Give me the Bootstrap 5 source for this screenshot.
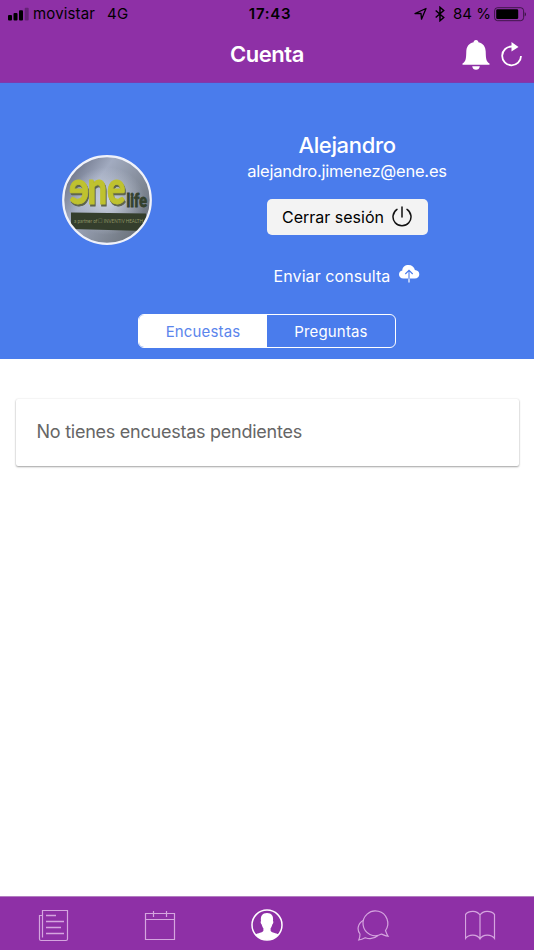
<!DOCTYPE html>
<html lang="es">
<head>
<meta charset="utf-8">
<meta name="viewport" content="width=device-width, initial-scale=1">
<title>Cuenta</title>
<link href="https://cdn.jsdelivr.net/npm/bootstrap@5.3.0/dist/css/bootstrap.min.css" rel="stylesheet">
<style>
body{font-family:Inter,"Liberation Sans",sans-serif;background:#fff;height:950px;overflow:hidden}
svg{display:block;flex:none}
.app-head{background:#8e30a6;border-bottom:1px solid #7d3aae;height:83px}
.status{height:28px;font-size:15px;line-height:28px;color:#000;display:grid;grid-template-columns:1fr auto 1fr;padding:0 7px 0 8px}
.clock{letter-spacing:.7px;padding-left:5px}
.signal{margin-right:4px}
.carrier{letter-spacing:.15px}
.net{margin-left:12px;letter-spacing:.2px}
.battery{margin-left:3px;margin-right:1px}
.title-row{height:54px;display:grid;grid-template-columns:1fr auto 1fr;padding-right:10px;padding-left:10px}
.title-row h1{font-size:22px;line-height:52px;font-weight:600;color:#fff;letter-spacing:-.45px}
.profile{background:#4a7cec;height:276px;color:#fff}
.who{height:231px;display:grid;grid-template-columns:213px 268px}
.avatar{margin-top:72px}
.relief{filter:drop-shadow(1px 2px 0 #5d634b)}
.person{padding-top:48px}
.name{font-size:22px;line-height:28px;font-weight:500;letter-spacing:-.35px}
.mail{font-size:16.5px;line-height:24px;letter-spacing:-.22px}
.out{background:#f3f3f3;border:0;border-radius:5px;width:161px;height:36px;margin-top:16px;font-size:16px;color:#000;padding:0}
.ask{margin-top:28px;font-size:16px;line-height:26px;letter-spacing:.07px}
.cloud{margin-top:1px}
.seg{width:258px;height:34px;border-radius:6px;border:1.5px solid #fff;overflow:hidden;font-size:15px;line-height:33px;letter-spacing:.16px}
.seg .on{background:#fff;color:#5b85ec}
.notice{margin:40px 15.5px 0;height:67px;border:0;border-radius:2px;box-shadow:0 1px 2px rgba(0,0,0,.35),0 0 2px rgba(0,0,0,.1);padding:0 21px;font-size:18px;line-height:65px;color:#666;letter-spacing:-.25px}
.tabs{height:54px;background:#8e30a6;border-top:1px solid #b27dc0}
.tabs a{flex:1;padding-top:9px}
</style>
<script src="https://cdn.jsdelivr.net/npm/bootstrap@5.3.0/dist/js/bootstrap.bundle.min.js"></script>
</head>
<body class="d-flex flex-column">
<header class="app-head">
  <div class="status">
    <div class="d-flex align-items-center"><svg class="signal" width="21" height="14" viewBox="0 0 21 14"><rect y="8" width="4" height="5.5" rx="1"/><rect x="5.5" y="6" width="4" height="7.5" rx="1"/><rect x="11" y="3.3" width="4" height="10.2" rx="1"/><rect x="16.7" y=".8" width="4" height="12.7" rx="1" opacity=".28"/></svg><span class="carrier">movistar</span><span class="net">4G</span></div>
    <div class="clock fw-semibold">17:43</div>
    <div class="d-flex align-items-center justify-content-end">
      <svg width="13" height="14" viewBox="0 0 13 14" fill="none" stroke="#000" stroke-width="1.3" stroke-linejoin="round"><path d="M1 6.500 12 1.500 7.500 12.200 7 6.500Z"/></svg>
      <svg class="ms-2" width="10" height="16" viewBox="0 0 10 16" fill="none" stroke="#000" stroke-width="1.5"><path d="M.7 4.500 8.700 11.500 5 14.700V1.300L8.700 4.500.7 11.500"/></svg>
      <span class="ms-2">84 %</span>
      <svg class="battery" width="32" height="15" viewBox="0 0 32 15"><rect x=".6" y=".7" width="29" height="13" rx="3" fill="none" stroke="#000" opacity=".55"/><rect x="2.200" y="2.300" width="22" height="9.800" rx="1.300"/><path d="M30.700 5.200c1.700.6 1.700 3.700 0 4.300z" opacity=".6"/></svg>
    </div>
  </div>
  <div class="title-row">
    <span></span><h1 class="m-0">Cuenta</h1>
    <div class="d-flex justify-content-end align-items-center">
      <svg width="28" height="32" viewBox="0 0 28 32" fill="#fff"><path d="M14 1c1.700 0 2.200 1 2.400 2.200 5 1.100 7.200 4.800 7.300 9.300.2 7.500.4 9.700 3.800 12.100v1.200H.5v-1.200c3.400-2.400 3.600-4.600 3.800-12.100.1-4.500 2.300-8.200 7.300-9.300C11.800 2 12.300 1 14 1Z"/><path d="M10.200 27.200h7.600c-.3 2.300-1.700 3.600-3.800 3.600s-3.500-1.300-3.800-3.600Z"/></svg>
      <svg class="ms-2" width="26" height="26" viewBox="0 0 26 26"><path d="M14 4.500A9.400 9.400 0 1 0 23 14" fill="none" stroke="#fff" stroke-width="1.800"/><path d="M13.500 0 20.500 5 13.500 9.500Z" fill="#fff"/></svg>
    </div>
  </div>
</header>
<section class="profile">
  <div class="who">
    <svg class="avatar mx-auto" width="90" height="90" viewBox="0 0 90 90">
      <defs><clipPath id="face"><circle cx="45" cy="45" r="43.500"/></clipPath><linearGradient id="wall" x1="0" y1="0" x2="1" y2=".7"><stop stop-color="#50566a"/><stop offset=".4" stop-color="#a2abc0"/><stop offset="1" stop-color="#697078"/></linearGradient><radialGradient id="glow"><stop stop-color="#d3dae9" stop-opacity=".9"/><stop offset="1" stop-color="#d3dae9" stop-opacity="0"/></radialGradient></defs>
      <g clip-path="url(#face)"><path fill="url(#wall)" d="M0 0h90v90H0z"/><ellipse cx="45" cy="46" rx="38" ry="34" fill="url(#glow)"/>
      <g class="relief" font-family="Lato,sans-serif" font-weight="900" font-size="45" fill="#bfc22f" stroke="#bfc22f" stroke-width=".8"><text x="-27" y="48.500" transform="scale(-1 1)" textLength="20" lengthAdjust="spacingAndGlyphs">e</text><text x="25.500" y="48.500" textLength="38" lengthAdjust="spacingAndGlyphs">ne</text></g>
      <text x="64.500" y="52" font-family="Lato,sans-serif" font-weight="900" font-size="19" fill="#34412e" stroke="#34412e" stroke-width=".9" textLength="20.500" lengthAdjust="spacingAndGlyphs">life</text>
      <path fill="#343e2c" d="m9 57.500 75 1v17.500L9 74z"/><text x="12" y="68" font-family="Lato,sans-serif" font-size="5.500" fill="#8f9564" textLength="69" lengthAdjust="spacingAndGlyphs">a partner of ☐ INVENTIV HEALTH</text></g>
      <circle cx="45" cy="45" r="43.800" fill="none" stroke="#f0f2fa" stroke-width="2.200"/>
    </svg>
    <div class="person text-center d-flex flex-column align-items-center">
      <div class="name">Alejandro</div>
      <div class="mail">alejandro.jimenez@ene.es</div>
      <button class="out d-flex align-items-center justify-content-center">Cerrar sesión<svg class="ms-2" width="20" height="22" viewBox="0 0 20 22" fill="none" stroke="#111" stroke-width="1.500" stroke-linecap="round"><path d="M10 1v10M5 3.300a9 9 0 1 0 10 0"/></svg></button>
      <div class="ask d-flex">Enviar consulta<svg class="cloud ms-2" width="22" height="20" viewBox="0 0 22 20"><path fill="#fff" d="M5.500 14.500C2.600 14.500 1 12.800 1 10.500c0-2 1.300-3.500 3.300-3.900C4.300 3 7 1 10.500 1c3.400 0 5.800 2 6.400 5 2.700.2 4.400 1.900 4.400 4.200 0 2.500-1.700 4.300-4.600 4.300Z"/><path d="M11 15V6.500M7.300 10 11 6.300l3.700 3.700" fill="none" stroke="#4a7cec" stroke-width="1.100"/><path d="M11 14.500V18.500" stroke="#fff" stroke-width="1.200"/></svg></div>
    </div>
  </div>
  <div class="seg d-flex mx-auto text-center"><div class="on w-50">Encuestas</div><div class="w-50">Preguntas</div></div>
</section>
<main class="flex-grow-1"><div class="card notice">No tienes encuestas pendientes</div></main>
<nav class="tabs d-flex">
  <a href="#" class="d-flex justify-content-center" aria-label="Noticias"><svg width="32" height="36" viewBox="-1 0 32 36" fill="none" stroke="#d5a5df" stroke-width="1.200"><path d="M4.500 31.500V4.500H29.500V33q0 1.500-1.500 1.500H3Q1.500 34.500 1.500 33V9.500h3"/><path d="M8 9.500h10M8 15.500h18M8 21.500h15M8 27.500h18" stroke-width="1.500"/></svg></a>
  <a href="#" class="d-flex justify-content-center" aria-label="Calendario"><svg width="32" height="36" viewBox="0 0 32 36" fill="none" stroke="#d5a5df" stroke-width="1.200"><path d="M1.500 7.500h29v26h-29zM1.500 13.500h29M9.500 5v6M22.500 5v6"/></svg></a>
  <a href="#" class="d-flex justify-content-center" aria-label="Cuenta"><svg width="32" height="36" viewBox="0 0 32 36"><circle cx="16" cy="19" r="15" fill="none" stroke="#fff" stroke-width="1.500"/><path fill="#fff" d="M16 7c4.700 0 6.700 3 6 8 .8.700.2 3-.7 3.500-.4 2-1.100 3-1.700 3.800v2.500c1 2 5.500 2.200 8 3.800C25 32 21 34 16 34S7 32 4.400 28.600c2.500-1.600 7-1.800 8-3.800v-2.500c-.6-.8-1.300-1.800-1.700-3.800-.9-.5-1.500-2.800-.7-3.500-.7-5 1.300-8 6-8Z"/></svg></a>
  <a href="#" class="d-flex justify-content-center" aria-label="Mensajes"><svg width="34" height="36" viewBox="1 0 34 36" fill="none" stroke="#d5a5df" stroke-width="1.200"><path d="M29.500 24.500A12.400 12.400 0 1 0 25.500 28.100C28 29 30 30 32 30.200 30.800 28.500 30.300 26.500 29.500 24.500Z"/><path d="M7 14.500C1.500 18 .8 24 4 28c0 2.700-.4 4.400-1.200 6 2.500-.3 4.400-1.200 6.400-2.300 5 1.700 10 .3 12.800-2.200"/></svg></a>
  <a href="#" class="d-flex justify-content-center" aria-label="Biblioteca"><svg width="32" height="36" viewBox="1 0 32 36" fill="none" stroke="#d5a5df" stroke-width="1.200"><path d="M16 9C13 4.300 5 4.300 1.500 8.500v24c3.300-4.500 11.500-4.500 14.500.5 3-5 11.200-5 14.500-.5v-24C27 4.300 19 4.300 16 9V33"/></svg></a>
</nav>
</body>
</html>
